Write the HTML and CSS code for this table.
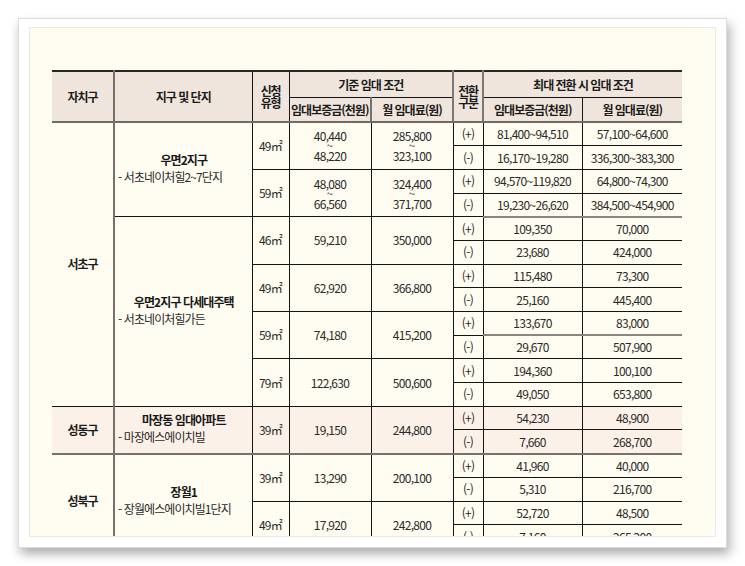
FILE: index.html
```html
<!DOCTYPE html>
<html lang="ko">
<head>
<meta charset="utf-8">
<title>임대 조건</title>
<link rel="stylesheet" href="styles.css">
</head>
<body>
<div class="frame">
  <div class="paper">
    <table class="rent">
      <colgroup>
        <col class="c-gu"><col class="c-dan"><col class="c-type"><col class="c-dep"><col class="c-mon"><col class="c-sw"><col class="c-dep2"><col class="c-mon2">
      </colgroup>
      <thead>
        <tr class="h1">
          <th rowspan="2" class="gu">자치구</th>
          <th rowspan="2">지구 및 단지</th>
          <th rowspan="2" class="two">신청<br>유형</th>
          <th colspan="2">기준 임대 조건</th>
          <th rowspan="2" class="two sw">전환<br>구분</th>
          <th colspan="2">최대 전환 시 임대 조건</th>
        </tr>
        <tr class="h2">
          <th>임대보증금(천원)</th>
          <th>월 임대료(원)</th>
          <th>임대보증금(천원)</th>
          <th>월 임대료(원)</th>
        </tr>
      </thead>
      <tbody>
        <tr>
          <td rowspan="12" class="gu">서초구</td>
          <td rowspan="4" class="dan"><b>우면2지구</b><span>- 서초네이처힐2~7단지</span></td>
          <td rowspan="2">49㎡</td>
          <td rowspan="2" class="rng"><div>40,440</div><div class="til">~</div><div>48,220</div></td>
          <td rowspan="2" class="rng"><div>285,800</div><div class="til">~</div><div>323,100</div></td>
          <td>(+)</td><td>81,400~94,510</td><td>57,100~64,600</td>
        </tr>
        <tr><td>(-)</td><td>16,170~19,280</td><td>336,300~383,300</td></tr>
        <tr>
          <td rowspan="2">59㎡</td>
          <td rowspan="2" class="rng"><div>48,080</div><div class="til">~</div><div>66,560</div></td>
          <td rowspan="2" class="rng"><div>324,400</div><div class="til">~</div><div>371,700</div></td>
          <td>(+)</td><td>94,570~119,820</td><td>64,800~74,300</td>
        </tr>
        <tr><td>(-)</td><td>19,230~26,620</td><td>384,500~454,900</td></tr>
        <tr>
          <td rowspan="8" class="dan"><b>우면2지구 다세대주택</b><span>- 서초네이처힐가든</span></td>
          <td rowspan="2">46㎡</td><td rowspan="2">59,210</td><td rowspan="2">350,000</td>
          <td>(+)</td><td class="gl">109,350</td><td class="gl">70,000</td>
        </tr>
        <tr><td>(-)</td><td>23,680</td><td>424,000</td></tr>
        <tr>
          <td rowspan="2">49㎡</td><td rowspan="2">62,920</td><td rowspan="2">366,800</td>
          <td>(+)</td><td>115,480</td><td>73,300</td>
        </tr>
        <tr><td>(-)</td><td>25,160</td><td>445,400</td></tr>
        <tr>
          <td rowspan="2">59㎡</td><td rowspan="2">74,180</td><td rowspan="2">415,200</td>
          <td>(+)</td><td>133,670</td><td>83,000</td>
        </tr>
        <tr><td>(-)</td><td class="gl">29,670</td><td class="gl">507,900</td></tr>
        <tr>
          <td rowspan="2">79㎡</td><td rowspan="2">122,630</td><td rowspan="2">500,600</td>
          <td>(+)</td><td>194,360</td><td>100,100</td>
        </tr>
        <tr><td>(-)</td><td>49,050</td><td>653,800</td></tr>
        <tr class="pink">
          <td rowspan="2" class="gu">성동구</td>
          <td rowspan="2" class="dan"><b>마장동 임대아파트</b><span>- 마장에스에이치빌</span></td>
          <td rowspan="2">39㎡</td><td rowspan="2">19,150</td><td rowspan="2">244,800</td>
          <td>(+)</td><td>54,230</td><td>48,900</td>
        </tr>
        <tr class="pink"><td>(-)</td><td>7,660</td><td>268,700</td></tr>
        <tr class="sep">
          <td rowspan="4" class="gu">성북구</td>
          <td rowspan="4" class="dan"><b>장월1</b><span>- 장월에스에이치빌1단지</span></td>
          <td rowspan="2">39㎡</td><td rowspan="2">13,290</td><td rowspan="2">200,100</td>
          <td>(+)</td><td>41,960</td><td>40,000</td>
        </tr>
        <tr><td>(-)</td><td>5,310</td><td>216,700</td></tr>
        <tr>
          <td rowspan="2">49㎡</td><td rowspan="2">17,920</td><td rowspan="2">242,800</td>
          <td>(+)</td><td>52,720</td><td>48,500</td>
        </tr>
        <tr><td>(-)</td><td>7,160</td><td>265,200</td></tr>
      </tbody>
    </table>
  </div>
</div>
</body>
</html>
```

FILE: styles.css
```css
html, body {
  margin: 0;
  background: #ffffff;
}

body {
  font-family: "Noto Sans CJK KR", "Noto Sans", sans-serif;
  color: #2a2a2a;
}

.frame {
  margin: 18px;
  height: 510px;
  padding: 8px 10px 10px 10px;
  border: 1px solid #dcdcdc;
  background: #ffffff;
  box-shadow: 4px 6px 10px rgba(0, 0, 0, 0.25), -2px 6px 8px rgba(0, 0, 0, 0.08);
}

.paper {
  box-sizing: border-box;
  height: 510px;
  padding: 42px 0 0 22px;
  border: 1px solid #ece9df;
  background: #fffcf1;
  overflow: hidden;
}

.rent {
  width: 630px;
  table-layout: fixed;
  border-collapse: collapse;
  border-top: 2px solid #2a2520;
  font-size: 12px;
  letter-spacing: -0.7px;
}

.c-gu { width: 62px; }
.c-dan { width: 138px; }
.c-type { width: 37px; }
.c-dep { width: 82px; }
.c-mon { width: 82px; }
.c-sw { width: 30px; }
.c-dep2 { width: 99px; }
.c-mon2 { width: 100px; }

.rent th,
.rent td {
  padding: 0 1px;
  text-align: center;
  vertical-align: middle;
  border: 1px solid #151515;
  line-height: 14px;
  white-space: nowrap;
}

.rent th:first-child,
.rent td.gu {
  border-left: none;
  border-right: 2px solid #77716c;
}

.rent tr > *:last-child {
  border-right: none;
}

.rent th {
  background: #efe5dc;
  color: #1c1c1c;
  font-weight: 700;
  letter-spacing: -1px;
}

.rent .h1 th { height: 25px; border-top: none; }
.rent .h2 th { height: 23px; border-bottom: 2px solid #716b66; }
.rent th.gu,
.rent th[rowspan] { border-bottom: 2px solid #716b66; }

.rent th.two { line-height: 12px; letter-spacing: -1.2px; padding: 0; }
.rent th.sw { border-left: 2px solid #7d7873; border-right: 2px solid #7d7873; }

.rent tbody tr { height: 23.7px; }

.rent td.gu {
  font-weight: 700;
  letter-spacing: -1px;
  color: #1c1c1c;
}

.rent td.dan {
  text-align: left;
  padding: 0 2px 4px 3px;
  letter-spacing: -0.9px;
}

.rent td.dan b {
  display: block;
  text-align: center;
  font-weight: 700;
  color: #181818;
  line-height: 18px;
}

.rent td.dan span {
  display: block;
  line-height: 15px;
}

.rent td.rng div { line-height: 13px; }
.rent td.rng .til { line-height: 7px; height: 7px; font-size: 11px; letter-spacing: 0; }

.rent td.gl { border-top: 2px solid #8a8580; }

.rent tr.pink td { background: #fcf1e9; }

.rent tr.sep td { border-top: 2px solid #77716c; }
```
